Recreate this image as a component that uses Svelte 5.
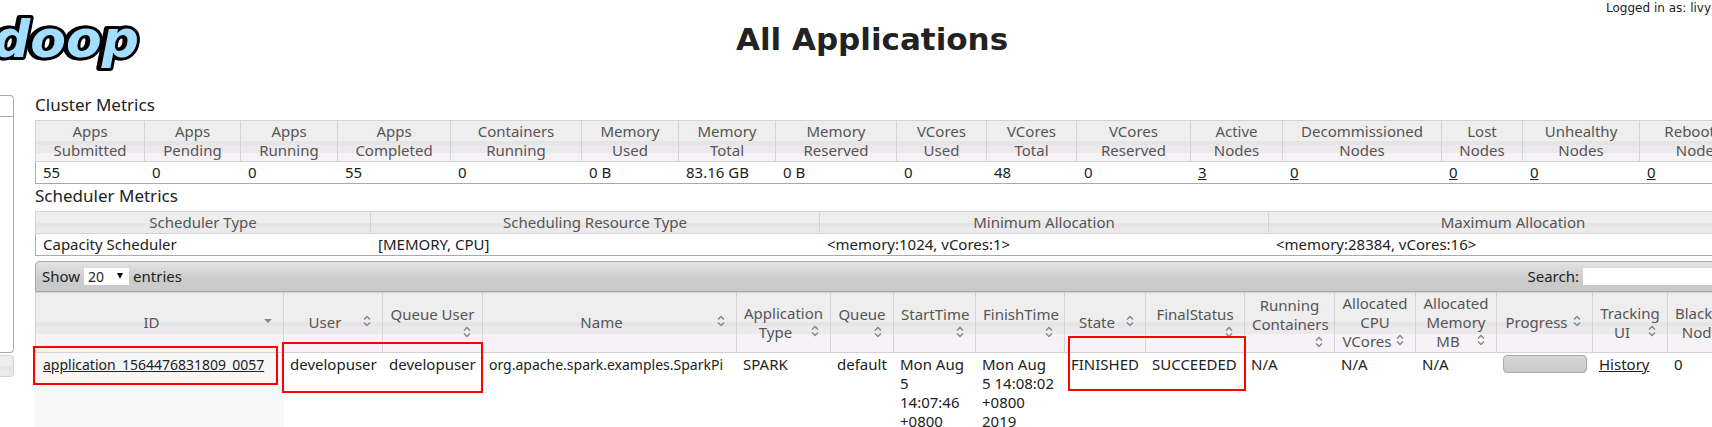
<script>
  const metrics = [
    ['Apps', 'Submitted', '55', 110],
    ['Apps', 'Pending', '0', 96],
    ['Apps', 'Running', '0', 97],
    ['Apps', 'Completed', '55', 113],
    ['Containers', 'Running', '0', 131],
    ['Memory', 'Used', '0 B', 97],
    ['Memory', 'Total', '83.16 GB', 97],
    ['Memory', 'Reserved', '0 B', 121],
    ['VCores', 'Used', '0', 90],
    ['VCores', 'Total', '48', 90],
    ['VCores', 'Reserved', '0', 114],
    ['Active', 'Nodes', '3', 92, true],
    ['Decommissioned', 'Nodes', '0', 159, true],
    ['Lost', 'Nodes', '0', 81, true],
    ['Unhealthy', 'Nodes', '0', 117, true],
    ['Rebooted', 'Nodes', '0', 118, true]
  ];
  const scheduler = [
    ['Scheduler Type', 'Capacity Scheduler', 336],
    ['Scheduling Resource Type', '[MEMORY, CPU]', 449],
    ['Minimum Allocation', '<memory:1024, vCores:1>', 449],
    ['Maximum Allocation', '<memory:28384, vCores:16>', 489]
  ];
  const columns = [
    [['ID'], 249],
    [['User'], 99],
    [['Queue User'], 100],
    [['Name'], 254],
    [['Application', 'Type'], 94],
    [['Queue'], 63],
    [['StartTime'], 82],
    [['FinishTime'], 89],
    [['State'], 81],
    [['FinalStatus'], 99],
    [['Running', 'Containers'], 90],
    [['Allocated', 'CPU', 'VCores'], 81],
    [['Allocated', 'Memory', 'MB'], 81],
    [['Progress'], 96],
    [['Tracking', 'UI'], 75],
    [['Blacklisted', 'Nodes'], 90]
  ];
  const app = {
    id: 'application_1564476831809_0057',
    users: ['developuser', 'developuser'],
    name: 'org.apache.spark.examples.SparkPi',
    details: ['SPARK', 'default', 'Mon Aug\n5\n14:07:46\n+0800\n2019', 'Mon Aug\n5 14:08:02\n+0800\n2019',
      'FINISHED', 'SUCCEEDED', 'N/A', 'N/A', 'N/A']
  };
</script>

<div class="page">
  <header>
    <svg class="logo" width="150" height="80" viewBox="0 0 150 80" role="img" aria-label="hadoop">
      <text x="-7" y="57">doop</text>
    </svg>
    <h1>All Applications</h1>
    <div class="user">Logged in as: livy</div>
  </header>

  <div class="body">
    <aside>
      <div class="panel"><div class="panel-head"></div></div>
      <div class="tools"></div>
    </aside>

    <main>
      <h2>Cluster Metrics</h2>
      <table class="metrics">
        <colgroup>{#each metrics as m}<col style="width:{m[3]}px" />{/each}</colgroup>
        <thead>
          <tr>{#each metrics as m}<th scope="col">{m[0]}<br />{m[1]}</th>{/each}</tr>
        </thead>
        <tbody>
          <tr>
            {#each metrics as m}
              <td>{#if m[4]}<a href="#nodes">{m[2]}</a>{:else}{m[2]}{/if}</td>
            {/each}
          </tr>
        </tbody>
      </table>

      <h2>Scheduler Metrics</h2>
      <table class="metrics">
        <colgroup>{#each scheduler as s}<col style="width:{s[2]}px" />{/each}</colgroup>
        <thead>
          <tr>{#each scheduler as s}<th scope="col">{s[0]}</th>{/each}</tr>
        </thead>
        <tbody>
          <tr>{#each scheduler as s}<td>{s[1]}</td>{/each}</tr>
        </tbody>
      </table>

      <div class="toolbar">
        <label class="length">Show
          <span class="select">
            <select><option>20</option><option>40</option><option>60</option></select>
            <svg width="6" height="6" viewBox="0 0 6 6"><path d="M0 0h6L3 6z" fill="#111" /></svg>
          </span>
          entries</label>
        <label class="search">Search: <input type="text" /></label>
      </div>

      <div class="list">
        <table class="apps">
          <colgroup>{#each columns as c}<col style="width:{c[1]}px" />{/each}</colgroup>
          <thead>
            <tr>
              {#each columns as c, i}
                <th scope="col">
                  <div class="sort">
                    {#each c[0] as line, n}{#if n}<br />{/if}{line}{/each}
                    <svg class="arrows" width="16" height="16" viewBox="0 0 16 16">
                      {#if i === 0}
                        <path d="M4 6h8L8 10z" fill="#888" />
                      {:else}
                        <path d="M5 6.5L8 3.5L11 6.5M5 9.5L8 12.5L11 9.5" fill="none" stroke="#888" stroke-width="1.5" />
                      {/if}
                    </svg>
                  </div>
                </th>
              {/each}
            </tr>
          </thead>
          <tbody>
            <tr>
              <td class="id long"><a href="#app">{app.id}</a></td>
              {#each app.users as cell}<td>{cell}</td>{/each}
              <td class="long">{app.name}</td>
              {#each app.details as cell}<td>{cell}</td>{/each}
              <td><div class="progress"></div></td>
              <td><a href="#history">History</a></td>
              <td>0</td>
            </tr>
          </tbody>
        </table>
        <div class="mark id-mark"></div>
        <div class="mark user-mark"></div>
        <div class="mark state-mark"></div>
      </div>
    </main>
  </div>
</div>

<style>
  :global(html), :global(body) { overflow: hidden; }
  .page {
    height: 100vh;
    overflow: hidden;
    background: #fff;
    color: #222;
    font: 15px/19px "Noto Sans", "Open Sans", sans-serif;
  }
  header {
    display: grid;
    grid-template-columns: 150px 1fr 150px;
    height: 93px;
  }
  .logo { display: block; }
  .logo text {
    font: italic bold 52px "DejaVu Sans", sans-serif;
    fill: #a3ddff;
    stroke: #000;
    stroke-width: 6px;
    stroke-linejoin: round;
    paint-order: stroke;
    filter: drop-shadow(-2px 0 0 #000);
  }
  h1 {
    margin: 0;
    padding: 20px 0 0 32px;
    text-align: center;
    font: bold 31px/38px "DejaVu Sans", Verdana, sans-serif;
  }
  .user { padding-right: 1px; text-align: right; font: 12px/16px "DejaVu Sans", Verdana, sans-serif; white-space: nowrap; }
  a { color: inherit; }

  .body { display: grid; grid-template-columns: 14px minmax(0, 1fr); column-gap: 21px; }
  aside { padding-top: 2px; }
  .panel {
    box-sizing: border-box;
    height: 258px;
    border: 1px solid #aaa;
    border-left: 0;
    border-radius: 0 4px 4px 0;
  }
  .panel-head { height: 20px; border-bottom: 1px solid #aaa; }
  .tools {
    box-sizing: border-box;
    height: 22px;
    margin-top: 2px;
    border: 1px solid #d3d3d3;
    border-left: 0;
    border-radius: 0 4px 4px 0;
    background: linear-gradient(#eee 50%, #e6e6e6 50% 68%, #ece9ec 68%);
  }

  main { margin-right: -46px; }
  h2 { margin: 0; padding-bottom: 3px; font-size: 17px; line-height: 24px; font-weight: 400; }
  table { width: 100%; table-layout: fixed; border-collapse: separate; border-spacing: 0; }
  th {
    box-sizing: border-box;
    padding: 1px 7px;
    border: 1px solid #d3d3d3;
    border-left-width: 0;
    color: #555;
    font-weight: 400;
    white-space: nowrap;
    background: linear-gradient(#eee 50%, #e6e5e6 50%, #e6e5e6 calc(50% + 4px), #ece9ec calc(50% + 4px), #ece9ec calc(50% + 12px), #f6f2f6 calc(50% + 12px));
  }
  th:first-child { border-left-width: 1px; }
  td { padding: 1px 7px; vertical-align: top; }
  .metrics td { border-bottom: 1px solid #aaa; white-space: nowrap; }
  .metrics td:first-child { border-left: 1px solid #aaa; }

  .toolbar {
    display: flex;
    justify-content: space-between;
    align-items: center;
    box-sizing: border-box;
    height: 31px;
    margin-top: 5px;
    padding: 0 6px;
    border: 1px solid #aaa;
    border-radius: 4px 4px 0 0;
    background: linear-gradient(#e4e2e4, #cacaca 65%);
  }
  .length, .search { display: flex; align-items: center; gap: 4px; }
  .select { position: relative; display: block; height: 17px; }
  .select svg { position: absolute; right: 6px; top: 5px; }
  select {
    display: block;
    appearance: none;
    width: 45px;
    height: 17px;
    padding: 0 4px;
    border: 0;
    border-radius: 0;
    background: #fff;
    color: #222;
    font: 14px/17px "Noto Sans", sans-serif;
  }
  .search input { box-sizing: border-box; width: 168px; height: 17px; padding: 0; border: 0; background: #fff; }

  .list { position: relative; }
  .apps th { height: 61px; }
  .apps td { padding: 2px 6px; white-space: pre-line; }
  .sort::after { content: ""; display: block; clear: both; }
  .arrows { float: right; }
  .apps .id { padding-left: 8px; background: #f7f7f7; }
  .apps .long { font-size: 14px; white-space: nowrap; }
  .progress {
    box-sizing: border-box;
    height: 18px;
    border: 1px solid #aaa;
    border-radius: 4px;
    background: linear-gradient(#d6d6d6, #cacaca);
  }
  .mark { position: absolute; box-sizing: border-box; border: 2px solid #f00; }
  .id-mark { left: -2px; top: 54px; width: 245px; height: 39px; }
  .user-mark { left: 247px; top: 50px; width: 201px; height: 51px; }
  .state-mark { left: 1033px; top: 44px; width: 178px; height: 55px; }
</style>
